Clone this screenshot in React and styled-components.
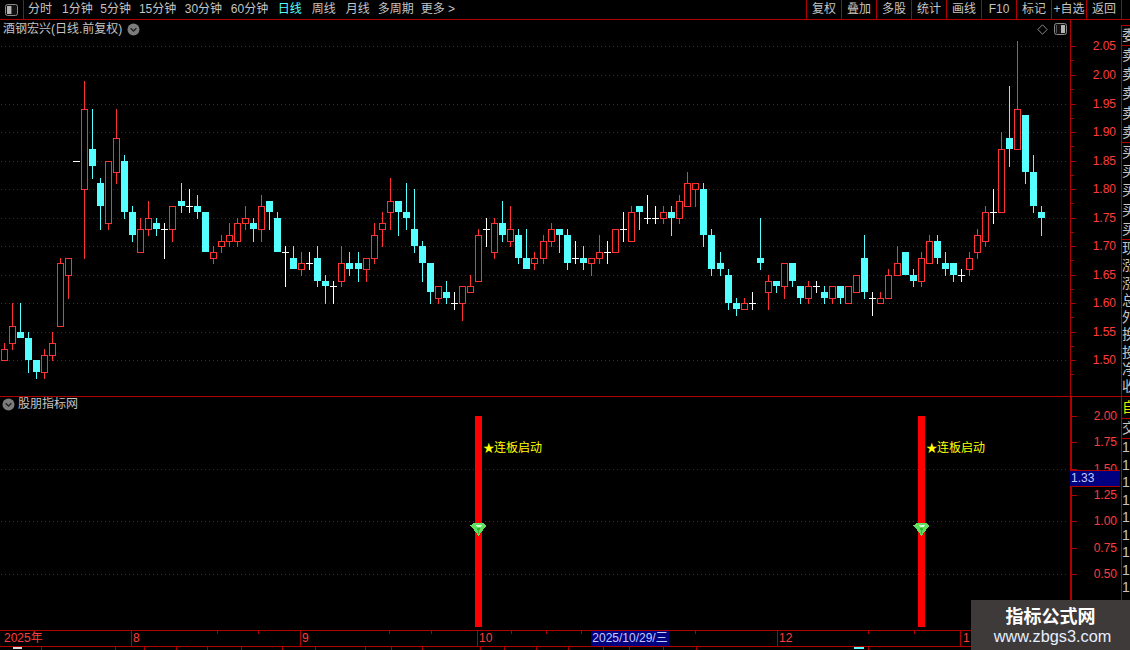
import React from "react";
import styled, { createGlobalStyle } from "styled-components";

const RED_LINE = "#b00000";
const RED_TEXT = "#ff3c3c";
const GRAY = "#c4c4c4";
const CYAN = "#54ffff";
const CANDLE_RED = "#ff3232";
const CJK = `"Liberation Sans", "Noto Sans CJK SC", sans-serif`;

// top bottom high low (in cents) + kind: r hollow up, c solid down, w doji
const RAW = `152 150 153 150 r,156 153 160 152 r,155 154 160 154 c,154 150 155 148 c,150 148 150 147 c,
151 148 152 147 r,153 151 155 150 r,167 156 168 156 r,168 165 168 161 r,185 185 185 185 w,
194 180 199 168 r,187 184 194 182 c,181 177 182 173 c,185 174 185 173 r,189 183 194 181 r,
185 176 186 175 c,176 172 177 171 c,173 169 175 169 r,175 173 178 172 r,174 173 175 172 c,
173 173 174 168 w,177 173 177 171 r,178 177 181 176 c,177 177 180 176 w,177 176 179 175 c,
176 169 176 169 c,169 168 170 167 r,171 170 172 169 r,172 171 174 170 r,174 171 175 170 r,
175 174 177 173 r,174 173 175 171 c,177 173 179 171 r,178 176 178 173 c,175 169 176 169 c,
169 169 170 163 w,168 166 170 166 c,167 166 169 165 r,167 167 169 166 w,168 164 170 163 c,
164 163 165 160 c,163 163 164 160 w,167 164 170 163 r,167 166 169 165 c,167 166 169 164 c,
168 166 168 164 r,172 168 174 167 r,174 173 176 170 r,178 176 182 173 r,178 176 178 172 c,
176 175 181 173 c,173 170 180 169 c,170 167 171 164 c,167 162 167 160 c,163 161 163 160 r,
162 161 164 160 c,160 160 162 159 w,163 160 163 157 r,163 162 165 162 r,172 164 173 164 r,
173 173 175 170 w,174 169 175 168 r,174 172 178 171 c,173 171 177 170 r,172 168 173 167 c,
168 166 173 166 c,168 167 169 166 r,171 168 172 167 r,173 171 174 170 r,173 172 173 169 c,
172 167 173 166 c,168 168 171 167 w,168 167 170 166 c,168 167 168 165 r,169 168 172 167 r,
169 169 171 167 w,173 169 173 169 r,173 173 176 171 w,176 171 177 171 r,177 176 177 173 c,
175 175 179 174 w,175 175 177 174 w,176 175 177 174 r,176 175 177 172 c,178 175 179 174 r,
181 177 183 177 r,181 180 181 177 r,180 172 181 170 c,172 166 173 165 c,167 166 169 165 c,
165 160 166 159 c,160 159 161 158 c,160 159 161 159 r,160 160 162 159 w,168 167 175 166 c,
164 162 165 159 r,164 163 164 162 c,167 163 167 161 r,167 164 167 163 c,163 161 163 160 c,
163 161 164 160 r,163 163 164 162 w,162 161 163 160 c,163 161 163 160 r,163 161 163 160 c,
163 160 163 160 r,165 162 165 162 r,168 162 172 161 c,161 161 162 158 w,161 160 162 160 r,
165 161 166 161 r,167 165 170 165 r,169 165 169 165 c,165 164 166 163 c,168 164 169 163 r,
171 167 172 167 r,171 168 172 167 c,167 166 169 165 c,167 165 167 164 c,165 165 166 164 w,
168 166 169 165 r,172 169 173 168 r,176 171 177 170 r,176 176 180 174 w,187 176 190 176 r,
189 187 198 184 c,194 187 206 187 r,193 183 193 181 c,183 177 186 176 c,176 175 177 172 c`;

const CANDLES = RAW.split(",").map((row, i) => {
  const [top, bottom, high, low, kind] = row.trim().split(" ");
  return { x: Math.round(3.52 + i * 8.045), top: +top, bottom: +bottom, high: +high, low: +low, kind };
});

const priceY = (cents) => Math.round(46.4 + (205 - cents) * 5.71);
const lowerY = (value) => Math.round(416 + (2 - value) * 105.3);

const UPPER_TICKS = ["2.05", "2.00", "1.95", "1.90", "1.85", "1.80", "1.75", "1.70", "1.65", "1.60", "1.55", "1.50"];
const LOWER_TICKS = ["2.00", "1.75", "1.50", "1.25", "1.00", "0.75", "0.50"];
const PERIODS = [
  { name: "分时", gap: 0 },
  { name: "1分钟", gap: 10 },
  { name: "5分钟", gap: 7.5 },
  { name: "15分钟", gap: 8 },
  { name: "30分钟", gap: 8.5 },
  { name: "60分钟", gap: 8.7 },
  { name: "日线", gap: 9.5 },
  { name: "周线", gap: 10 },
  { name: "月线", gap: 10 },
  { name: "多周期", gap: 8 },
  { name: "更多 >", gap: 7 },
];
const ACTIONS = ["复权", "叠加", "多股", "统计", "画线", "F10", "标记", "+自选", "返回"];
const SIGNALS = [478, 921];
const DATE_TICKS = [217, 258, 389, 431, 511, 546, 581, 695, 868, 914];
const DATE_CELLS = [
  { label: "2025年", width: 131, inset: 4 },
  { label: "8", width: 169, inset: 1 },
  { label: "9", width: 177, inset: 1 },
  { label: "10", width: 300, inset: 1 },
  { label: "12", width: 183, inset: 1 },
  { label: "1", width: 170, inset: 2 },
];
const FOOT_TABS = [42, 74, 29, 32, 31, 34, 41, 33, 50, 26, 31, 58, 24, 32, 32, 35, 26, 34, 33, 172];
const QUOTE_GROUPS = [
  { rows: ["委"], height: 20, rowHeight: 19 },
  { rows: ["卖", "卖", "卖", "卖", "卖"], height: 97, rowHeight: 19.2 },
  { rows: ["买", "买", "买", "买", "买"], height: 97, rowHeight: 19.2 },
  { rows: ["现", "涨", "涨", "总", "外", "换", "投", "净", "收"], height: 157, rowHeight: 17.3 },
  { rows: ["自"], height: 22, rowHeight: 20, tone: "#e8e800" },
  { rows: ["交"], height: 20, rowHeight: 19 },
  { rows: Array(12).fill("1"), height: 211, rowHeight: 17.5, open: true },
];

const GlobalStyle = createGlobalStyle`
  html, body {
    margin: 0;
    padding: 0;
    background: #000;
  }
`;

const Screen = styled.div`
  position: relative;
  width: 1130px;
  height: 650px;
  overflow: hidden;
  background: #000;
  color: ${GRAY};
  font: 12px/19px ${CJK};
  display: flex;
  flex-direction: column;
`;

const Toolbar = styled.div`
  display: flex;
  height: 19px;
  border-bottom: 1px solid ${RED_LINE};
  flex: none;
`;

const LayoutCell = styled.div`
  width: 23px;
  border-right: 1px solid ${RED_LINE};
  display: flex;
  align-items: center;
  justify-content: center;
`;

const Periods = styled.div`
  display: flex;
  padding-left: 4px;
`;

const Period = styled.span`
  margin-left: ${(p) => p.$gap}px;
  color: ${(p) => (p.$active ? CYAN : GRAY)};
  white-space: nowrap;
`;

const Actions = styled.div`
  display: flex;
  margin-left: auto;
  margin-right: 8px;
  border-right: 1px solid ${RED_LINE};
`;

const Action = styled.div`
  width: 34px;
  text-align: center;
  border-left: 1px solid ${RED_LINE};
  white-space: nowrap;
`;

const Workspace = styled.div`
  display: flex;
  flex: 1;
  min-height: 0;
`;

const Charts = styled.div`
  width: 1121px;
  flex: none;
  display: flex;
  flex-direction: column;
`;

const Pane = styled.div`
  display: flex;
  height: ${(p) => p.$height}px;
  border-bottom: 1px solid ${RED_LINE};
  flex: none;
`;

const Plot = styled.div`
  position: relative;
  width: 1070px;
  flex: none;
`;

const PlotDrawing = styled.svg`
  display: block;
  font-family: ${CJK};
`;

const Axis = styled.svg`
  display: block;
  flex: none;
  border-left: ${(p) => p.$line}px solid ${RED_LINE};
  font-family: "Liberation Sans", sans-serif;
  font-size: 12px;
`;

const PaneHeader = styled.div`
  position: absolute;
  left: ${(p) => p.$left}px;
  top: ${(p) => p.$top}px;
  display: flex;
  align-items: center;
  gap: ${(p) => p.$gap}px;
  white-space: nowrap;
`;

const PaneTools = styled.div`
  position: absolute;
  right: 3px;
  top: 3px;
  display: flex;
  align-items: center;
  gap: 6px;
`;

const PriceTag = styled.div`
  position: absolute;
  left: 0;
  top: 73px;
  width: 49px;
  height: 15px;
  background: #000080;
  border-top: 1px solid ${RED_LINE};
  border-bottom: 1px solid ${RED_LINE};
  color: #c4c8ff;
  font: 12px/15px "Liberation Sans", sans-serif;
  padding-left: 1px;
  box-sizing: content-box;
`;

const AxisHolder = styled.div`
  position: relative;
  flex: none;
`;

const DateAxis = styled.div`
  position: relative;
  display: flex;
  height: 15px;
  flex: none;
  border-bottom: 1px solid ${RED_LINE};
  color: ${RED_TEXT};
  line-height: 15px;
`;

const DateCell = styled.div`
  width: ${(p) => p.$width}px;
  flex: none;
  box-sizing: border-box;
  padding-left: ${(p) => p.$inset}px;
  border-left: ${(p) => (p.$first ? "0" : `1px solid ${RED_LINE}`)};
`;

const DateTicks = styled.svg`
  position: absolute;
  left: 0;
  top: 0;
`;

const Cursor = styled.div`
  position: absolute;
  left: 591px;
  top: 0;
  width: 78px;
  height: 15px;
  background: #000080;
  color: #c4c8ff;
  text-align: center;
  white-space: nowrap;
`;

const Footer = styled.div`
  display: flex;
  height: 3px;
  overflow: hidden;
`;

const FootTab = styled.div`
  position: relative;
  width: ${(p) => p.$width}px;
  flex: none;
  box-sizing: border-box;
  border-right: 1px solid ${RED_LINE};
`;

const FootMark = styled.i`
  position: absolute;
  top: 0;
  left: ${(p) => p.$left}px;
  width: ${(p) => p.$width}px;
  height: 2px;
  background: ${(p) => p.$tone};
`;

const Quote = styled.div`
  width: 9px;
  flex: none;
  margin-top: 5px;
  border-top: 1px solid ${RED_LINE};
  border-left: 1px solid ${RED_LINE};
  overflow: hidden;
`;

const QuoteGroup = styled.div`
  height: ${(p) => p.$height}px;
  box-sizing: border-box;
  overflow: hidden;
  border-bottom: ${(p) => (p.$open ? "0" : `1px solid ${RED_LINE}`)};
  color: ${(p) => p.$tone || GRAY};
  font-size: 14px;
  line-height: ${(p) => p.$rowHeight}px;
`;

const QuoteRow = styled.div`
  width: 8px;
  height: ${(p) => p.$rowHeight}px;
  overflow: hidden;
  white-space: nowrap;
`;

const Watermark = styled.div`
  position: absolute;
  right: 0;
  bottom: 0;
  width: 159px;
  height: 50px;
  background: #3f3a3a;
  display: flex;
  flex-direction: column;
  align-items: center;
  color: #fff;
`;

const WatermarkTitle = styled.div`
  font: bold 18px/22px "Noto Sans CJK SC", sans-serif;
  margin-top: 4px;
`;

const WatermarkUrl = styled.div`
  font: 16.3px/20px "Liberation Sans", sans-serif;
  color: #e6efff;
  margin-left: 4px;
`;

function Chevron() {
  return (
    <svg width="13" height="13" viewBox="0 0 13 13">
      <circle cx="6.5" cy="6.5" r="6" fill="#7c7c7c" />
      <path d="M3.6 5.2 L6.5 8 L9.4 5.2" fill="none" stroke="#222" strokeWidth="1.4" />
    </svg>
  );
}

function LayoutIcon({ lit }) {
  return (
    <svg width="13" height="12" viewBox="0 0 13 12">
      <rect x="0.5" y="0.5" width="12" height="11" rx="2" fill="#111" stroke="#8a8a8a" />
      <rect x={lit === "left" ? 2 : 7} y="2" width="4" height="8" fill="#b4b4b4" />
      <rect x={lit === "left" ? 6 : 2} y="2" width="1" height="8" fill="#555" />
    </svg>
  );
}

function Candle({ x, top, bottom, high, low, kind }) {
  const yTop = priceY(top);
  const yBottom = priceY(bottom);
  const yHigh = priceY(high);
  const yLow = priceY(low);
  if (kind === "w") {
    return (
      <g fill="#fff">
        <rect x={x} y={yHigh} width="1" height={yLow - yHigh + 1} />
        <rect x={x - 3} y={yTop} width="7" height="1" />
      </g>
    );
  }
  const colour = kind === "r" ? CANDLE_RED : CYAN;
  return (
    <g fill={colour}>
      {yHigh < yTop && <rect x={x} y={yHigh} width="1" height={yTop - yHigh} />}
      {yLow > yBottom && <rect x={x} y={yBottom} width="1" height={yLow - yBottom + 1} />}
      {kind === "r" ? (
        <rect x={x - 2.5} y={yTop + 0.5} width="6" height={yBottom - yTop} fill="#000" stroke={colour} />
      ) : (
        <rect x={x - 3} y={yTop} width="7" height={yBottom - yTop} />
      )}
    </g>
  );
}

function Gridline({ y }) {
  return <line x1="1" x2="1066" y1={y + 0.5} y2={y + 0.5} stroke="#a80000" strokeDasharray="1 3" />;
}

function AxisScale({ ticks, yOf, minor }) {
  return ticks.map((label) => {
    const y = yOf(label);
    return (
      <g key={label}>
        <rect x="0" y={y} width="5" height="1" fill={RED_LINE} />
        {minor && <rect x="0" y={y + minor} width="3" height="1" fill={RED_LINE} />}
        <text x="45" y={y + 4} textAnchor="end" fill={RED_TEXT}>
          {label}
        </text>
      </g>
    );
  });
}

function Signal({ x }) {
  return (
    <g>
      <rect x={x - 3} y="416" width="7" height="211" fill="#ff0000" />
      <path d={`M${x - 7.5} 525.5 L${x - 4} 523 H${x + 5} L${x + 8.5} 525.5 L${x + 0.5} 536 Z`} fill="#5fe05f" />
      <path d={`M${x - 3} 525 H${x + 4} L${x + 2} 527 H${x - 1} Z`} fill="#d8ffd8" />
      <path d={`M${x - 1} 528 H${x + 2} L${x + 0.5} 534 Z`} fill="#2fb92f" />
      <text x={x + 5} y="452" fontSize="12" fill="#ffff00">
        <tspan fontSize="11.5">★</tspan>
        <tspan dx="-0.5">连板启动</tspan>
      </text>
    </g>
  );
}

export default function App() {
  return (
    <>
      <GlobalStyle />
      <Screen>
        <Toolbar>
          <LayoutCell>
            <LayoutIcon lit="left" />
          </LayoutCell>
          <Periods>
            {PERIODS.map(({ name, gap }) => (
              <Period key={name} $gap={gap} $active={name === "日线"}>
                {name}
              </Period>
            ))}
          </Periods>
          <Actions>
            {ACTIONS.map((name) => (
              <Action key={name}>{name}</Action>
            ))}
          </Actions>
        </Toolbar>
        <Workspace>
          <Charts>
            <Pane $height={376}>
              <Plot>
                <PlotDrawing width="1070" height="376" viewBox="0 20 1070 376" shapeRendering="crispEdges">
                  {UPPER_TICKS.map((label) => (
                    <Gridline key={label} y={priceY(Math.round(+label * 100))} />
                  ))}
                  {CANDLES.map((c) => (
                    <Candle key={c.x} {...c} />
                  ))}
                </PlotDrawing>
                <PaneHeader $left={3} $top={0} $gap={5}>
                  酒钢宏兴(日线.前复权)
                  <Chevron />
                </PaneHeader>
                <PaneTools>
                  <svg width="11" height="11" viewBox="0 0 11 11">
                    <path d="M5.5 0.8 L10.2 5.5 L5.5 10.2 L0.8 5.5 Z" fill="none" stroke="#8a8a8a" />
                  </svg>
                  <LayoutIcon lit="right" />
                </PaneTools>
              </Plot>
              <Axis $line={1} width="50" height="376" viewBox="0 20 50 376" shapeRendering="crispEdges">
                <AxisScale ticks={UPPER_TICKS} yOf={(label) => priceY(Math.round(+label * 100))} minor={14} />
              </Axis>
            </Pane>
            <Pane $height={233}>
              <Plot>
                <PlotDrawing width="1070" height="233" viewBox="0 397 1070 233" shapeRendering="crispEdges">
                  {[1.5, 1, 0.5].map((v) => (
                    <Gridline key={v} y={lowerY(v)} />
                  ))}
                  {SIGNALS.map((x) => (
                    <Signal key={x} x={x} />
                  ))}
                </PlotDrawing>
                <PaneHeader $left={2} $top={-2} $gap={3}>
                  <Chevron />
                  股朋指标网
                </PaneHeader>
              </Plot>
              <AxisHolder>
                <Axis $line={2} width="49" height="233" viewBox="0 397 49 233" shapeRendering="crispEdges">
                  <AxisScale ticks={LOWER_TICKS} yOf={(label) => lowerY(+label)} />
                </Axis>
                <PriceTag>1.33</PriceTag>
              </AxisHolder>
            </Pane>
            <DateAxis>
              {DATE_CELLS.map((cell, i) => (
                <DateCell key={cell.label} $width={cell.width} $inset={cell.inset} $first={i === 0}>
                  {cell.label}
                </DateCell>
              ))}
              <DateTicks width="1121" height="3">
                {DATE_TICKS.map((x) => (
                  <rect key={x} x={x} y="0" width="1" height="3" fill={RED_LINE} />
                ))}
              </DateTicks>
              <Cursor>2025/10/29/三</Cursor>
            </DateAxis>
            <Footer>
              {FOOT_TABS.map((width, i) => (
                <FootTab key={i} $width={width}>
                  {i === 0 && <FootMark $left={13} $width={9} $tone="#d8d8d8" />}
                  {i === 19 && <FootMark $left={157} $width={10} $tone={CYAN} />}
                </FootTab>
              ))}
            </Footer>
          </Charts>
          <Quote>
            {QUOTE_GROUPS.map((group, i) => (
              <QuoteGroup key={i} $height={group.height} $rowHeight={group.rowHeight} $tone={group.tone} $open={group.open}>
                {group.rows.map((row, r) => (
                  <QuoteRow key={r} $rowHeight={group.rowHeight}>
                    {row}
                  </QuoteRow>
                ))}
              </QuoteGroup>
            ))}
          </Quote>
        </Workspace>
        <Watermark>
          <WatermarkTitle>指标公式网</WatermarkTitle>
          <WatermarkUrl>www.zbgs3.com</WatermarkUrl>
        </Watermark>
      </Screen>
    </>
  );
}
